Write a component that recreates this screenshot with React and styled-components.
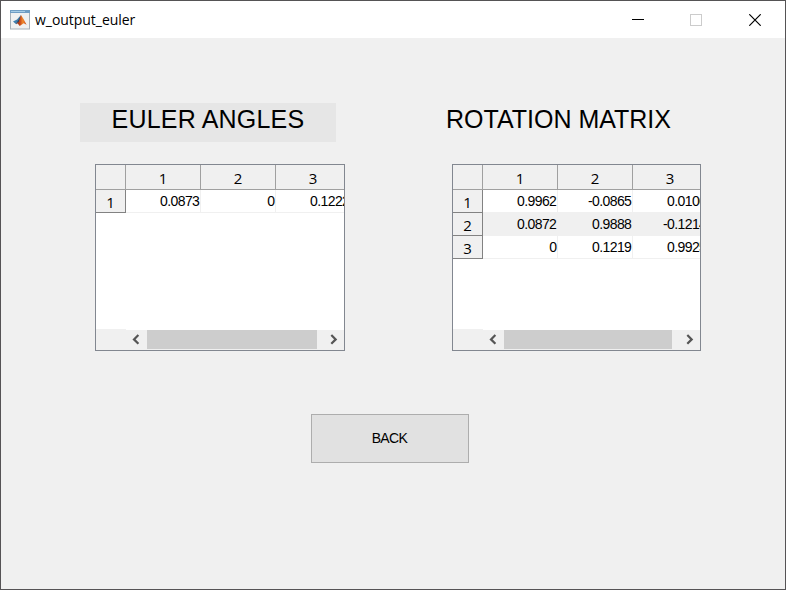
import React from "react";
import styled, { createGlobalStyle } from "styled-components";

const GlobalStyle = createGlobalStyle`
  *, *::before, *::after { box-sizing: border-box; }
  body { margin: 0; background: #f0f0f0; }
`;

const Window = styled.div`
  width: 786px;
  height: 590px;
  display: flex;
  flex-direction: column;
  border: 1px solid #555355;
  background: #f0f0f0;
  color: #000;
  font-family: "Liberation Sans", Arial, sans-serif;
  overflow: hidden;
`;

const TitleBar = styled.header`
  flex: none;
  height: 37px;
  display: flex;
  align-items: center;
  background: #fff;
  padding-left: 9px;
`;

const Title = styled.h1`
  flex: 1;
  margin: 0 0 0 5px;
  font: 400 14px/20px "Open Sans", "Noto Sans", sans-serif;
  letter-spacing: -0.04px;
`;

const CaptionButton = styled.button`
  width: ${(p) => p.$width || 58}px;
  height: 37px;
  display: flex;
  align-items: center;
  justify-content: center;
  padding: 0;
  border: 0;
  background: none;
`;

const Content = styled.main`
  flex: 1;
  display: flex;
  flex-direction: column;
  align-items: flex-start;
  padding-top: 65px;
`;

const Panels = styled.div`
  display: flex;
`;

const Panel = styled.section`
  display: flex;
  flex-direction: column;
  gap: 22px;
  padding-left: ${(p) => p.$left}px;
`;

const Heading = styled.h2`
  width: ${(p) => p.$width}px;
  height: 39px;
  margin: 0;
  background: ${(p) => (p.$shaded ? "#e6e6e6" : "transparent")};
  font-size: 25px;
  font-weight: 400;
  line-height: 32px;
  letter-spacing: ${(p) => p.$spacing}px;
  text-align: center;
  white-space: nowrap;
`;

const TableFrame = styled.div`
  width: ${(p) => p.$width}px;
  height: 187px;
  margin-left: 15px;
  display: flex;
  flex-direction: column;
  border: 1px solid #828790;
  background: #fff;
  overflow: hidden;
`;

const Row = styled.div`
  flex: none;
  display: grid;
  grid-template-columns: 30px repeat(3, 75px);
  grid-template-rows: 100%;
  height: ${(p) => (p.$header ? 25 : 23)}px;
  background: ${(p) => (p.$striped ? "#f0f0f0" : "#fff")};
`;

const HeaderCell = styled.div`
  border-right: 1px solid #a0a0a0;
  border-bottom: 1px solid #a0a0a0;
  background: #f0f0f0;
  padding-top: ${(p) => (p.$row ? 2 : 3)}px;
  font: 400 15px/21px "Open Sans", "Noto Sans", sans-serif;
  text-align: center;
  ${(p) => p.$row && "border-color: #828282; line-height: 20px;"}
`;

const Cell = styled.div`
  border-right: 1px solid #f0f0f0;
  border-bottom: 1px solid #f0f0f0;
  padding-right: 0.7px;
  font-size: 14px;
  line-height: 22px;
  letter-spacing: -0.6px;
  text-align: right;
`;

const Footer = styled.div`
  flex: none;
  display: flex;
  align-items: flex-end;
  height: 21px;
  margin-top: auto;
`;

const FooterCorner = styled.div`
  width: 30px;
  height: 21px;
  background: #f0f0f0;
`;

const ScrollBar = styled.div`
  flex: 1;
  height: 20px;
  display: flex;
  background: #f0f0f0;
`;

const ScrollThumb = styled.div`
  width: ${(p) => p.$width}px;
  height: 19px;
  margin-right: auto;
  background: #cdcdcd;
`;

const ScrollArrow = styled.svg`
  display: block;
  flex: none;
  width: 21px;
  height: 19px;
`;

const BackButton = styled.button`
  width: 158px;
  height: 49px;
  margin: 63px 0 0 310px;
  padding: 0 1px 2px 0;
  border: 1px solid #adadad;
  background: #e1e1e1;
  color: #000;
  font: 400 14px/20px "Liberation Sans", Arial, sans-serif;
  letter-spacing: -0.6px;
`;

function MatlabIcon() {
  return (
    <svg width="20" height="20" viewBox="0 0 20 20" aria-hidden="true">
      <defs>
        <linearGradient id="peak" x1="0" x2="1" y1="0" y2="0">
          <stop offset="0" stopColor="#7c2b20" />
          <stop offset="0.4" stopColor="#c84a1c" />
          <stop offset="0.65" stopColor="#f08a2c" />
          <stop offset="1" stopColor="#c8431b" />
        </linearGradient>
      </defs>
      <rect x="0.5" y="0.5" width="19" height="18.5" fill="#eff0f1" stroke="#a5afb8" />
      <rect x="0" y="0" width="20" height="3" fill="#6f9dc4" />
      <rect x="1" y="1" width="14" height="1" fill="#a6cce6" />
      <path d="M3 11.6 7 9.6 11 5 9.5 11.5 6.2 14.2Z" fill="#3f7fae" />
      <path d="M5.8 13.6 8.3 11.8 11 5 13.2 8.6 16.6 14.8 13.7 13.2 9.7 16 7.7 13.5Z" fill="url(#peak)" />
      <path d="M11 5 9 9.2 6.8 12.4 8.6 12.1Z" fill="#233d63" />
    </svg>
  );
}

function DataTable({ width, thumb, rows }) {
  return (
    <TableFrame $width={width}>
      <Row $header>
        <HeaderCell />
        {[1, 2, 3].map((n) => <HeaderCell key={n}>{n}</HeaderCell>)}
      </Row>
      {rows.map((row, i) => (
        <Row key={i} $striped={i % 2 === 1}>
          <HeaderCell $row>{i + 1}</HeaderCell>
          {row.map((value, j) => <Cell key={j}>{value}</Cell>)}
        </Row>
      ))}
      <Footer>
        <FooterCorner />
        <ScrollBar>
          <ScrollArrow viewBox="0 0 21 19">
            <path d="M12.4 5 8 9.4 12.4 13.8" fill="none" stroke="#555" strokeWidth="2.2" />
          </ScrollArrow>
          <ScrollThumb $width={thumb} />
          <ScrollArrow viewBox="0 0 21 19">
            <path d="M8.3 5 12.7 9.4 8.3 13.8" fill="none" stroke="#555" strokeWidth="2.2" />
          </ScrollArrow>
        </ScrollBar>
      </Footer>
    </TableFrame>
  );
}

export default function App() {
  return (
    <Window>
      <GlobalStyle />
      <TitleBar>
        <MatlabIcon />
        <Title>w_output_euler</Title>
        <CaptionButton aria-label="Minimize">
          <svg width="12" height="12"><path d="M0 5.5H12" stroke="#000" /></svg>
        </CaptionButton>
        <CaptionButton aria-label="Maximize" disabled>
          <svg width="12" height="12"><rect x="0.5" y="0.5" width="11" height="11" fill="none" stroke="#ccc" /></svg>
        </CaptionButton>
        <CaptionButton aria-label="Close" $width={60}>
          <svg width="12" height="12"><path d="M.3.3 11.7 11.7M11.7.3.3 11.7" stroke="#000" strokeWidth="1.2" /></svg>
        </CaptionButton>
      </TitleBar>
      <Content>
        <Panels>
          <Panel $left={79}>
            <Heading $shaded $width={256} $spacing={0.2}>EULER ANGLES</Heading>
            <DataTable width={250} thumb={170} rows={[["0.0873", "0", "0.1222"]]} />
          </Panel>
          <Panel $left={92}>
            <Heading $width={243} $spacing={0}>ROTATION MATRIX</Heading>
            <DataTable
              width={249}
              thumb={168}
              rows={[
                ["0.9962", "-0.0865", "0.0106"],
                ["0.0872", "0.9888", "-0.1214"],
                ["0", "0.1219", "0.9925"],
              ]}
            />
          </Panel>
        </Panels>
        <BackButton>BACK</BackButton>
      </Content>
    </Window>
  );
}
